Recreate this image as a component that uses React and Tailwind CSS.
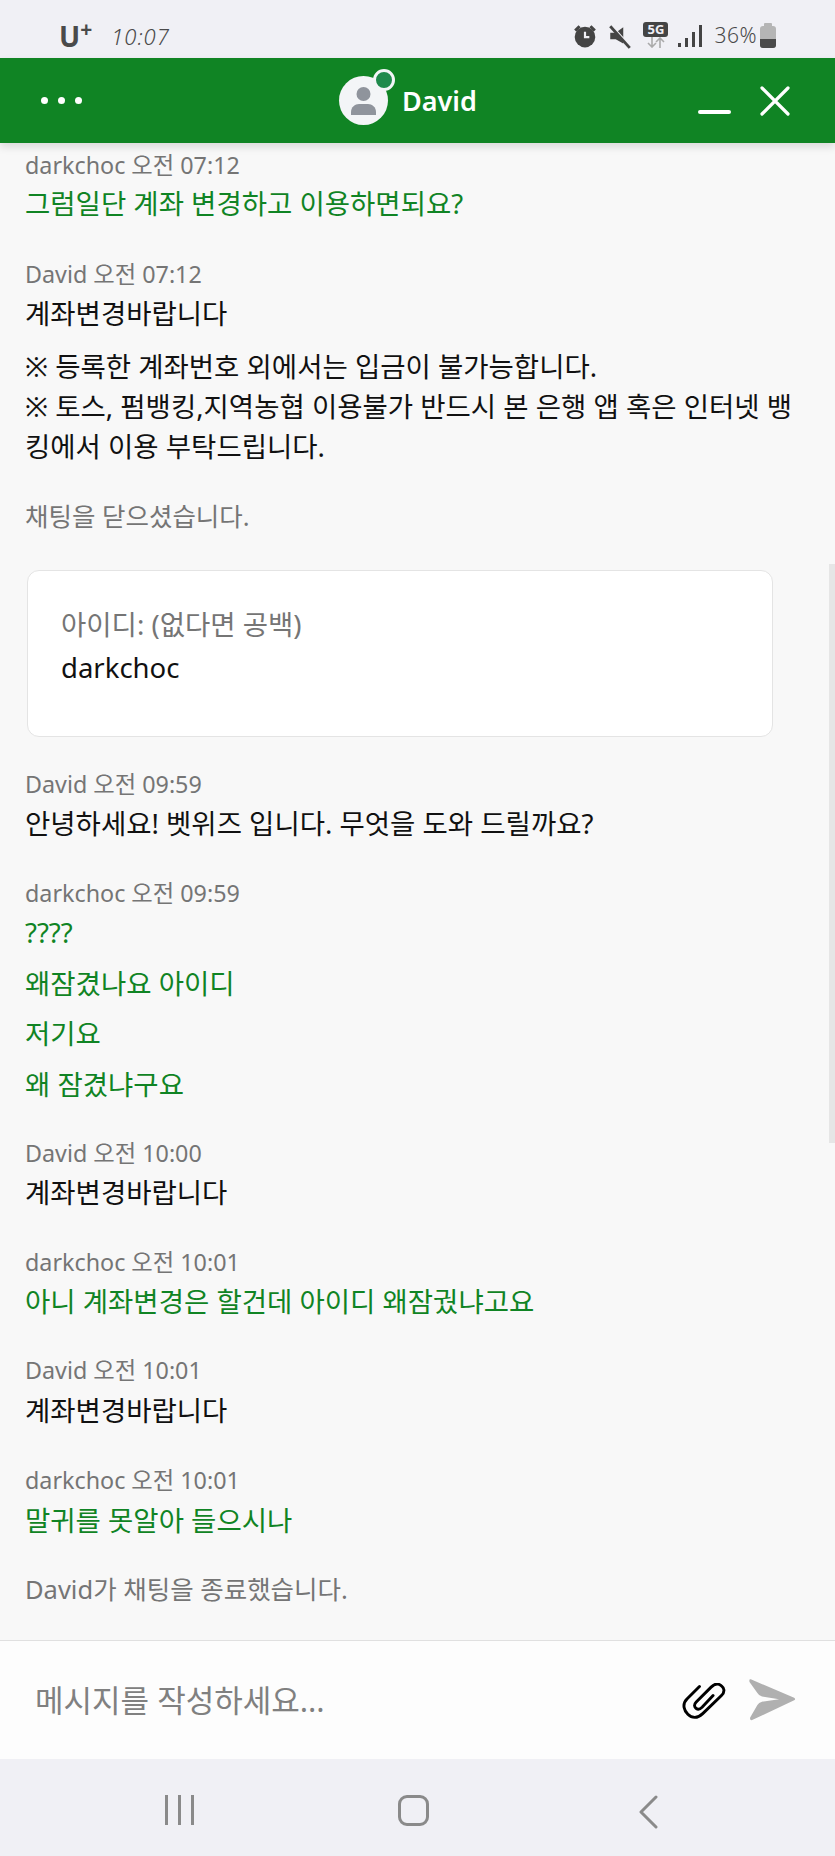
import React from "react";

const Meta = ({ children, className = "" }) => (
  <div className={`h-[30px] text-[23.3px] leading-[30px] text-[#757575] ${className}`}>{children}</div>
);

const SystemLine = ({ children, className = "" }) => (
  <div className={`h-[30px] text-[25.5px] leading-[30px] text-[#757575] ${className}`}>{children}</div>
);

const Msg = ({ children, color = "text-[#111111]", className = "" }) => (
  <div className={`text-[27.5px] leading-[40px] ${color} ${className}`}>{children}</div>
);

const Green = ({ children, className = "mt-[4px]" }) => (
  <Msg color="text-[#108424]" className={className}>{children}</Msg>
);

const StatusBar = () => (
  <div className="h-[58px] shrink-0 bg-[#f0f0f5] flex items-center pt-[13px] pl-[59px] pr-[59px] text-[#4a4a4a]">
    <div className="flex items-start font-bold leading-none">
      <span className="text-[28px] leading-none">U</span>
      <span className="text-[21px] leading-none -mt-[3px]">+</span>
    </div>
    <span className="ml-[19px] text-[22px] italic leading-none font-light tracking-[1px]">10:07</span>
    <div className="ml-auto flex items-center">
      <svg width="26" height="26" viewBox="0 0 24 24" fill="#444">
        <circle cx="12" cy="13" r="9.5" />
        <path d="M2 6l4-4 2 2-4 4zM22 6l-4-4-2 2 4 4z" />
        <path d="M12 8v5h4" stroke="#f0f0f5" strokeWidth="2" fill="none" />
      </svg>
      <svg className="ml-[9px]" width="26" height="26" viewBox="0 0 24 24" fill="#444">
        <path d="M3 9h5l7-5v15l-7-4H3z" />
        <path d="M3 2l19 21" stroke="#f0f0f5" strokeWidth="3" />
        <path d="M3 3l18 20" stroke="#444" strokeWidth="2.6" />
      </svg>
      <div className="ml-[10px] w-[25px] flex flex-col items-center -mt-[2px]">
        <div className="w-[25px] h-[15px] rounded-[3px] bg-[#444] text-[#f0f0f5] text-[13px] leading-[15px] font-bold text-center">5G</div>
        <svg width="20" height="11" viewBox="0 0 20 11" fill="none" stroke="#aaa" strokeWidth="1.6">
          <path d="M6 0v10M2 6l4 4 4-4" />
          <path d="M14 11V1M10 5l4-4 4 4" />
        </svg>
      </div>
      <div className="ml-[10px] flex items-end gap-[4px] h-[22px]">
        <div className="w-[3px] h-[4px] bg-[#444]" />
        <div className="w-[3px] h-[9px] bg-[#444]" />
        <div className="w-[3px] h-[15px] bg-[#444]" />
        <div className="w-[3px] h-[22px] bg-[#444]" />
      </div>
      <span className="ml-[12px] text-[21px] leading-none font-light tracking-[0.5px]">36%</span>
      <div className="ml-[3px] w-[16px] flex flex-col items-center">
        <div className="w-[8px] h-[3px] bg-[#b5b5b5] rounded-t-[1px]" />
        <div className="w-[16px] h-[22px] rounded-[3px] bg-[#b5b5b5] flex flex-col justify-end overflow-hidden">
          <div className="h-[9px] bg-[#4a4a4a]" />
        </div>
      </div>
    </div>
  </div>
);

const Header = () => (
  <header className="relative z-10 h-[85px] shrink-0 bg-[#108424] flex items-center pl-[41px] pr-[45px] text-white shadow-[0_4px_8px_rgba(0,0,0,0.12)]">
    <div className="flex gap-[10px]">
      <div className="w-[7px] h-[7px] rounded-full bg-white" />
      <div className="w-[7px] h-[7px] rounded-full bg-white" />
      <div className="w-[7px] h-[7px] rounded-full bg-white" />
    </div>
    <div className="ml-[257px] relative w-[49px] h-[49px] mt-[-1px] rounded-full bg-[#f3f5f7]">
      <svg className="absolute left-[12px] top-[10px]" width="25" height="29" viewBox="0 0 25 29" fill="#8f949c">
        <circle cx="12.5" cy="8" r="7" />
        <path d="M0 29v-3c0-5 4-8 8-8h9c4 0 8 3 8 8v3z" />
      </svg>
      <div className="absolute -top-[7px] -right-[7px] w-[22px] h-[22px] rounded-full bg-[#1f8a4c] border-[3px] border-[#f3f5f7]" />
    </div>
    <span className="ml-[14px] text-[27px] leading-none font-semibold">David</span>
    <div className="ml-auto flex items-center">
      <div className="w-[33px] h-[4px] bg-white rounded-full mt-[22px]" />
      <svg className="ml-[29px]" width="30" height="30" viewBox="0 0 30 30" fill="none" stroke="white" strokeWidth="3.2" strokeLinecap="round">
        <path d="M2 2l26 26M28 2L2 28" />
      </svg>
    </div>
  </header>
);

const InputBar = () => (
  <div className="h-[119px] shrink-0 bg-[#fdfdfd] border-t border-[#e0e0e0] flex items-center pl-[35px] pr-[38px]">
    <span className="text-[31px] leading-none text-[#808080]">메시지를 작성하세요...</span>
    <svg className="ml-auto mt-[3px]" width="44" height="38" viewBox="64 66 136 116" fill="none" stroke="#000" strokeWidth="9" strokeLinecap="round">
      <path d="M118 76L80 114C62 132 72 152 82 162C94 174 112 176 128 160L186 104C198 92 194 80 186 74C176 66 164 68 154 78L108 124C100 132 102 140 108 144C114 148 120 146 126 140L160 104" />
    </svg>
    <svg className="ml-[22px]" width="49" height="44" viewBox="264 56 148 134" fill="#b0b0b0">
      <path d="M272 60L404 116Q410 120 404 124L276 184Q268 186 270 176L292 138Q296 130 306 128L358 121L306 112Q296 110 292 102L268 68Q266 58 272 60z" />
    </svg>
  </div>
);

const NavBar = () => (
  <nav className="h-[97px] shrink-0 bg-[#f0f0f5] flex items-start pt-[36px] pl-[165px]">
    <div className="flex gap-[10px]">
      <div className="w-[3px] h-[30px] bg-[#8a8a8a]" />
      <div className="w-[3px] h-[30px] bg-[#8a8a8a]" />
      <div className="w-[3px] h-[30px] bg-[#8a8a8a]" />
    </div>
    <div className="ml-[204px] w-[31px] h-[31px] border-[3px] border-[#8a8a8a] rounded-[9px]" />
    <svg className="ml-[209px]" width="20" height="34" viewBox="0 0 20 34" fill="none" stroke="#8a8a8a" strokeWidth="3" strokeLinecap="round" strokeLinejoin="round">
      <path d="M18 2L3 17l15 15" />
    </svg>
  </nav>
);

export default function App() {
  return (
    <div className="relative w-[835px] h-[1856px] flex flex-col overflow-hidden bg-[#f8f8f8] font-['Noto_Sans','Noto_Sans_CJK_KR',sans-serif]">
      <StatusBar />
      <Header />

      <main className="flex-1 overflow-hidden pt-[7px] pl-[25px] pr-[30px]">
        <Meta>darkchoc 오전 07:12</Meta>
        <Green>그럼일단 계좌 변경하고 이용하면되요?</Green>

        <Meta className="mt-[35px]">David 오전 07:12</Meta>
        <Msg className="mt-[5px]">계좌변경바랍니다</Msg>
        <Msg className="mt-[13px]">※ 등록한 계좌번호 외에서는 입금이 불가능합니다.</Msg>
        <Msg>※ 토스, 펌뱅킹,지역농협 이용불가 반드시 본 은행 앱 혹은 인터넷 뱅킹에서 이용 부탁드립니다.</Msg>

        <SystemLine className="mt-[34px]">채팅을 닫으셨습니다.</SystemLine>

        <div className="mt-[39px] ml-[2px] mr-[-2px] w-[746px] h-[167px] bg-white border border-[#e4e4e4] rounded-[12px] pl-[33px] pt-[34px]">
          <div className="text-[27.5px] leading-[40px] text-[#757575]">아이디: (없다면 공백)</div>
          <div className="text-[27.5px] leading-[40px] text-[#111111] mt-[3px]">darkchoc</div>
        </div>

        <Meta className="mt-[32px]">David 오전 09:59</Meta>
        <Msg className="mt-[5px]">안녕하세요! 벳위즈 입니다. 무엇을 도와 드릴까요?</Msg>

        <Meta className="mt-[34px]">darkchoc 오전 09:59</Meta>
        <Green className="mt-[5px]">????</Green>
        <Green className="mt-[11px]">왜잠겼나요 아이디</Green>
        <Green className="mt-[10px]">저기요</Green>
        <Green className="mt-[11px]">왜 잠겼냐구요</Green>

        <Meta className="mt-[33px]">David 오전 10:00</Meta>
        <Msg className="mt-[5px]">계좌변경바랍니다</Msg>

        <Meta className="mt-[34px]">darkchoc 오전 10:01</Meta>
        <Green className="mt-[5px]">아니 계좌변경은 할건데 아이디 왜잠궜냐고요</Green>

        <Meta className="mt-[33px]">David 오전 10:01</Meta>
        <Msg className="mt-[6px]">계좌변경바랍니다</Msg>

        <Meta className="mt-[34px]">darkchoc 오전 10:01</Meta>
        <Green className="mt-[6px]">말귀를 못알아 들으시나</Green>

        <SystemLine className="mt-[33px]">David가 채팅을 종료했습니다.</SystemLine>
      </main>

      <InputBar />
      <NavBar />

      {/* scrollbar thumb */}
      <div className="absolute right-0 top-[564px] w-[6px] h-[579px] bg-[#e6e6e6]" />
    </div>
  );
}
